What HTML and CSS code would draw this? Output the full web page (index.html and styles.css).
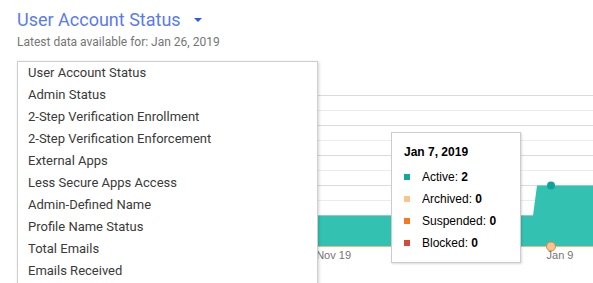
FILE: index.html
```html
<!doctype html>
<html lang="en">
  <head>
    <meta charset="UTF-8" />
    <meta name="viewport" content="width=device-width, initial-scale=1.0" />
    <title>User Account Status</title>
    <link rel="stylesheet" href="styles.css">
  </head>
  <body>
    <div class="report">
      <header class="report-header">
        <div class="report-title">
          <h1>User Account Status</h1>
          <span class="caret"></span>
        </div>
        <p class="report-updated">Latest data available for: Jan 26, 2019</p>
      </header>

      <div class="chart">
        <svg class="chart-plot" width="576" height="222" viewBox="0 0 576 222">
          <g class="grid-major">
            <path d="M0 34.5H576M0 64.5H576M0 94.5H576M0 124.5H576M0 154.5H576M0 184.5H576" />
          </g>
          <g class="grid-minor">
            <path d="M0 49.5H576M0 79.5H576M0 109.5H576M0 139.5H576M0 169.5H576" />
          </g>
          <polygon class="area-active" points="0,154.5 516,154.5 520,124.5 576,124.5 576,185.5 0,185.5" />
          <path class="line-archived" d="M0 185.5H576" />
          <circle class="dot-active" cx="534" cy="124.5" r="4" />
          <circle class="dot-archived" cx="534" cy="185.5" r="4.5" />
          <text class="axis-label" x="334" y="198" text-anchor="end">Nov 19</text>
          <text class="axis-label" x="543" y="198" text-anchor="middle">Jan 9</text>
        </svg>

        <ul class="metric-menu">
          <li>User Account Status</li>
          <li>Admin Status</li>
          <li>2-Step Verification Enrollment</li>
          <li>2-Step Verification Enforcement</li>
          <li>External Apps</li>
          <li>Less Secure Apps Access</li>
          <li>Admin-Defined Name</li>
          <li>Profile Name Status</li>
          <li>Total Emails</li>
          <li>Emails Received</li>
        </ul>

        <div class="chart-tooltip">
          <div class="tooltip-date">Jan 7, 2019</div>
          <ul class="tooltip-rows">
            <li><span class="swatch swatch-active"></span><span>Active: <b>2</b></span></li>
            <li><span class="swatch swatch-archived"></span><span>Archived: <b>0</b></span></li>
            <li><span class="swatch swatch-suspended"></span><span>Suspended: <b>0</b></span></li>
            <li><span class="swatch swatch-blocked"></span><span>Blocked: <b>0</b></span></li>
          </ul>
        </div>
      </div>
    </div>
  </body>
</html>
```

FILE: styles.css
```css
body {
  margin: 0;
  padding: 0;
  background: #fff;
  overflow: hidden;
  font-family: Roboto, "Liberation Sans", sans-serif;
}

.report {
  padding-left: 17px;
}

.report-header {
  padding-top: 9px;
}

.report-title {
  display: flex;
  align-items: center;
  gap: 13px;
}

.report-title h1 {
  margin: 0;
  font-size: 18px;
  line-height: 21px;
  font-weight: 400;
  color: #5a7bef;
}

.caret {
  width: 0;
  height: 0;
  border-left: 4px solid transparent;
  border-right: 4px solid transparent;
  border-top: 4px solid #2b5bdf;
  margin-top: 1px;
}

.report-updated {
  margin: 5px 0 0;
  font-size: 12px;
  line-height: 14px;
  color: #757575;
}

.chart {
  position: relative;
  margin-top: 12px;
  width: 576px;
}

.chart-plot {
  display: block;
}

.grid-major path {
  stroke: #dadada;
  stroke-width: 1;
  shape-rendering: crispEdges;
}

.grid-minor path {
  stroke: #ececec;
  stroke-width: 1;
  shape-rendering: crispEdges;
}

.area-active {
  fill: #33c2b2;
}

.line-archived {
  stroke: #f7b47c;
  stroke-width: 1;
}

.dot-active {
  fill: #13a396;
}

.dot-archived {
  fill: #fcc38e;
  stroke: #c88c58;
  stroke-width: 1;
}

.axis-label {
  font-family: "Liberation Sans", Arial, sans-serif;
  font-size: 11px;
  fill: #757575;
}

/* dropdown over the chart, runs past the bottom of the view */
.metric-menu {
  position: absolute;
  top: 0;
  left: 0;
  width: 301px;
  margin: 0;
  padding: 0 0 10px;
  list-style: none;
  background: #fff;
  border: 1px solid #cfcfcf;
  box-shadow: 1px 1px 3px rgba(0, 0, 0, 0.18);
  box-sizing: border-box;
}

.metric-menu li {
  padding-left: 10px;
  font-size: 13px;
  line-height: 22px;
  color: #3a3a3a;
  white-space: nowrap;
}

.chart-tooltip {
  position: absolute;
  top: 71px;
  left: 374px;
  width: 130px;
  height: 131px;
  box-sizing: border-box;
  padding: 12px 0 0 12px;
  background: #fff;
  border: 1px solid #cccccc;
  box-shadow: 1px 1px 2px rgba(0, 0, 0, 0.15);
  font-family: "Liberation Sans", Arial, sans-serif;
  font-size: 12px;
  color: #000;
}

.tooltip-date {
  font-weight: 700;
  line-height: 14px;
}

.tooltip-rows {
  margin: 7px 0 0;
  padding: 0;
  list-style: none;
}

.tooltip-rows li {
  display: flex;
  align-items: center;
  height: 22px;
}

.swatch {
  width: 6px;
  height: 6px;
  margin-right: 12px;
}

.swatch-active { background: #13a89c; }
.swatch-archived { background: #fbc38e; }
.swatch-suspended { background: #f47a20; }
.swatch-blocked { background: #d84a37; }
```
